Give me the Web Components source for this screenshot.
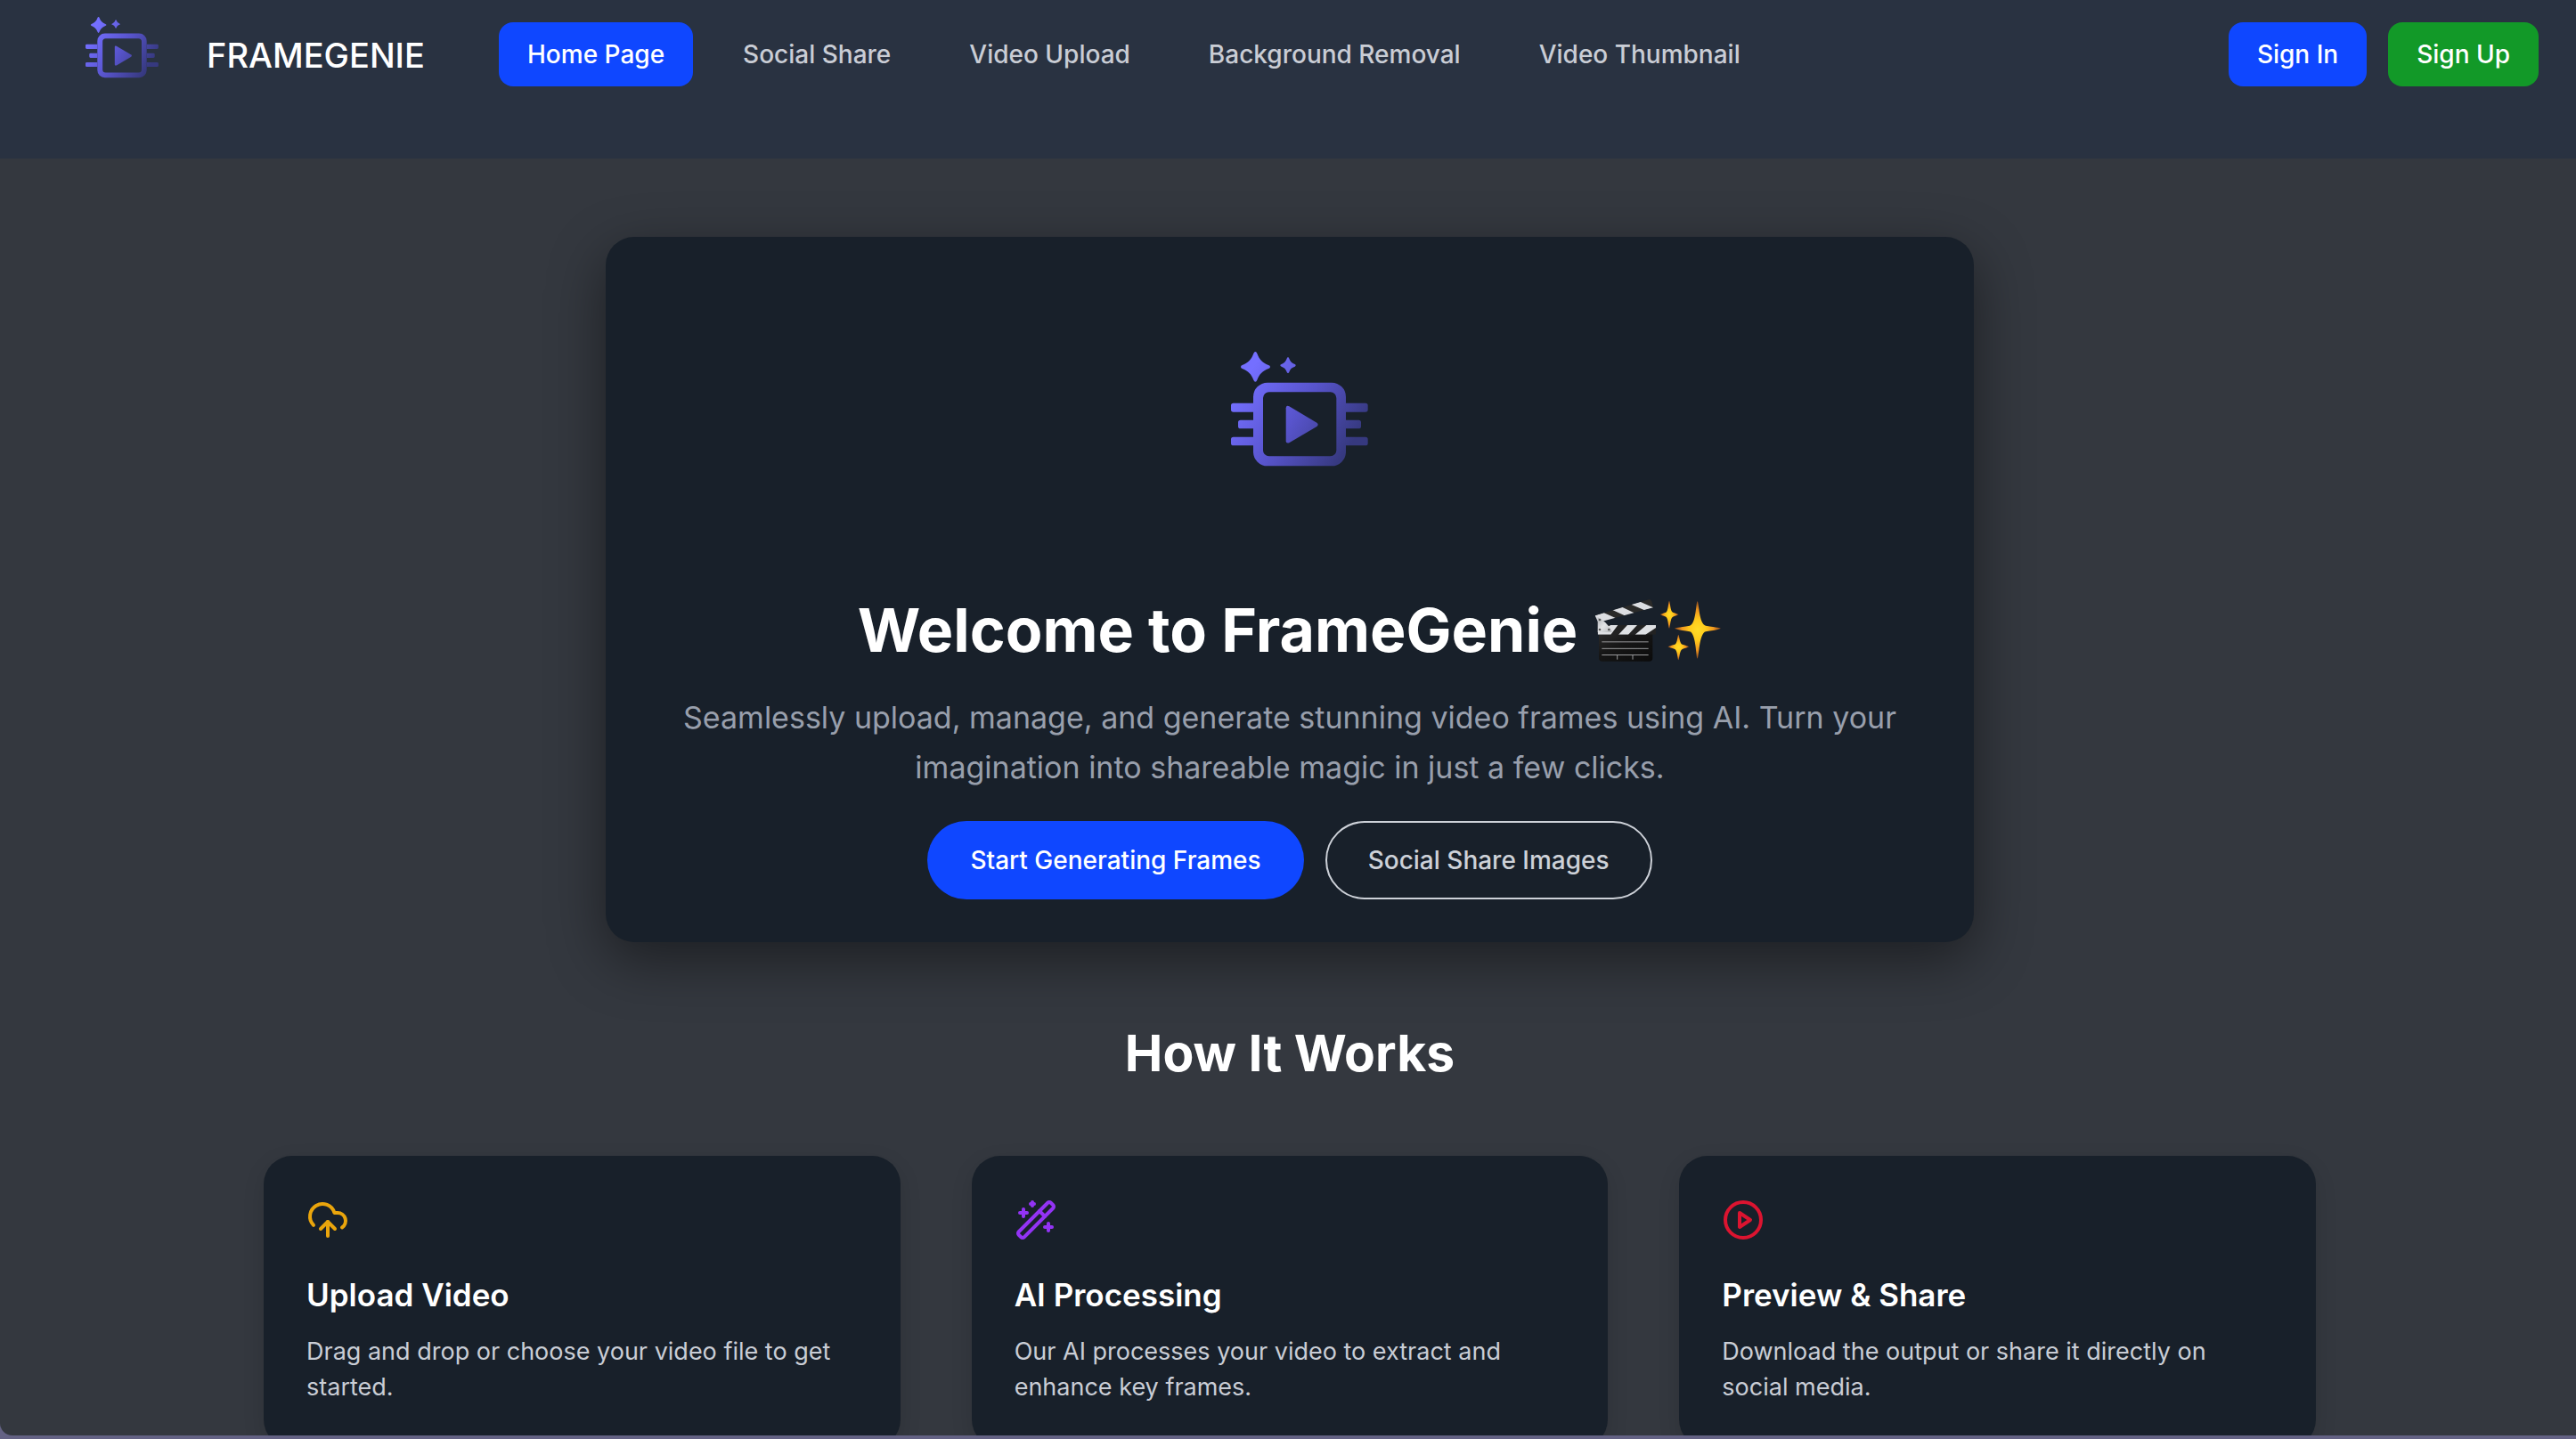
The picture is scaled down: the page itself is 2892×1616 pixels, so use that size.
<!DOCTYPE html>
<html lang="en">
<head>
<meta charset="utf-8">
<title>FrameGenie</title>
<style>
  html { background: #646284; }
  body { margin: 0; font-family: Inter, "Liberation Sans", sans-serif; color: #fff; }
</style>
</head>
<body>
<fg-app>
  <fg-header slot="header">
    <fg-nav-link active>Home Page</fg-nav-link>
    <fg-nav-link>Social Share</fg-nav-link>
    <fg-nav-link>Video Upload</fg-nav-link>
    <fg-nav-link>Background Removal</fg-nav-link>
    <fg-nav-link>Video Thumbnail</fg-nav-link>
    <fg-button slot="actions">Sign In</fg-button>
    <fg-button slot="actions" variant="success">Sign Up</fg-button>
  </fg-header>
  <fg-hero>
    <span slot="title">Welcome to FrameGenie</span>
    <span slot="text">Seamlessly upload, manage, and generate stunning video frames using AI. Turn your imagination into shareable magic in just a few clicks.</span>
    <fg-button slot="actions" variant="pill">Start Generating Frames</fg-button>
    <fg-button slot="actions" variant="outline">Social Share Images</fg-button>
  </fg-hero>
  <fg-steps>
    <span slot="title">How It Works</span>
    <fg-card icon="upload"><span slot="title">Upload Video</span>Drag and drop or choose your video file to get started.</fg-card>
    <fg-card icon="wand"><span slot="title">AI Processing</span>Our AI processes your video to extract and enhance key frames.</fg-card>
    <fg-card icon="play"><span slot="title">Preview &amp; Share</span>Download the output or share it directly on social media.</fg-card>
  </fg-steps>
</fg-app>

<script>
  const define = (name, render) => customElements.define(name, class extends HTMLElement {
    constructor() {
      super();
      this.attachShadow({ mode: 'open' });
    }
    connectedCallback() {
      this.shadowRoot.innerHTML = render(this);
    }
  });

  define('fg-app', () => `
    <style>
      :host { display: flex; flex-direction: column; height: calc(100vh - 4px); overflow: hidden;
              background: #34383f; border-radius: 0 0 0 14px; }
      main { display: flex; flex-direction: column; align-items: center; padding: 88px 0 0 4px; gap: 84px; }
    </style>
    <slot name="header"></slot>
    <main><slot></slot></main>`);

  define('fg-logo', () => `
    <style>
      :host { display: block; flex: none; }
      svg { display: block; width: 100%; }
    </style>
    <svg viewBox="126 104 462 386" role="img" aria-label="FrameGenie logo">
      <defs>
        <linearGradient id="g" gradientUnits="userSpaceOnUse" x1="190" y1="170" x2="540" y2="400">
          <stop offset="0" stop-color="#746fff"/>
          <stop offset=".5" stop-color="#5854cc"/>
          <stop offset="1" stop-color="#36397f"/>
        </linearGradient>
      </defs>
      <g fill="url(#g)">
        <path d="M208 104q4 0 6 6c7 20 18 31 38 39q6 2 6 6t-6 6c-20 8-31 19-38 38q-2 6-6 6t-6-6c-7-19-18-30-38-38q-5-2-5-6t5-6c20-8 31-19 38-39q2-6 6-6z"/>
        <path d="M318 123q3 0 4 4c4 10 9 15 19 19q3 1 3 4t-3 4c-10 3-15 8-19 18q-1 4-4 4t-4-4c-4-10-9-15-18-18q-4-1-4-4t4-4c9-4 14-9 18-19q1-4 4-4z"/>
        <path fill-rule="evenodd" d="M249 208h216a48 48 0 0 1 48 48v185a48 48 0 0 1-48 48H249a48 48 0 0 1-48-48V256a48 48 0 0 1 48-48zM254 240a20 20 0 0 0-20 20v176a20 20 0 0 0 20 20h207a20 20 0 0 0 20-20V260a20 20 0 0 0-20-20z"/>
        <path d="M201 277h-67q-8 0-8 8v14q0 8 8 8h67zM201 334h-43q-8 0-8 8v13q0 8 8 8h43zM201 391h-67q-8 0-8 8v13q0 8 8 8h67z"/>
        <path d="M513 277h66q8 0 8 8v14q0 8-8 8h-66zM513 334h43q8 0 8 8v13q0 8-8 8h-43zM513 391h66q8 0 8 8v13q0 8-8 8h-66z"/>
        <path d="M311 294q0-11 11-6l93 55q8 6 0 13l-93 55q-11 3-11-6z"/>
      </g>
    </svg>`);

  define('fg-header', () => `
    <style>
      :host { display: block; background: #293241; flex: none; }
      header { display: flex; align-items: flex-start; box-sizing: border-box; min-height: 178px; padding: 25px 42px 0 96px; }
      fg-logo { width: 82px; margin: -6px 54px 0 0; }
      .brand { font-size: 38px; line-height: 74px; font-weight: 500; color: #fff; text-decoration: none; min-width: 248px; margin-right: 80px; }
      nav, .actions { display: flex; gap: 24px; }
      .actions { margin-left: auto; }
    </style>
    <header>
      <fg-logo></fg-logo>
      <a class="brand" href="#">FRAMEGENIE</a>
      <nav><slot></slot></nav>
      <div class="actions"><slot name="actions"></slot></div>
    </header>`);

  define('fg-nav-link', () => `
    <style>
      :host { display: block; }
      a { display: block; padding: 16px 32px; border-radius: 16px; font-size: 28px; line-height: 40px;
          font-weight: 500; color: #c9cdd5; text-decoration: none; white-space: nowrap; }
      :host([active]) a { background: #0f47ff; color: #fff; }
    </style>
    <a href="#"><slot></slot></a>`);

  define('fg-button', () => `
    <style>
      :host { display: block; }
      button { display: block; box-sizing: border-box; border: 0; margin: 0; padding: 16px 32px; border-radius: 16px; font: inherit;
               font-size: 28px; line-height: 40px; font-weight: 500; color: #fff; background: #0f47ff; white-space: nowrap; }
      :host([variant=success]) button { background: #129928; }
      :host([variant=pill]) button { padding: 24px 48px; border-radius: 44px; }
      :host([variant=outline]) button { padding: 22px 46px; border-radius: 44px; border: 2px solid #cdd1d8; background: none; color: #cdd1d8; }
    </style>
    <button type="button"><slot></slot></button>`);

  define('fg-emoji', () => `
    <style>
      :host { display: block; flex: none; width: 144px; }
      svg { display: block; width: 100%; }
    </style>
    <svg viewBox="90 60 432 216" role="img" aria-label="clapper board and sparkles">
      <defs>
        <linearGradient id="b" x1="0" y1="0" x2="1" y2="1">
          <stop offset="0" stop-color="#2b2b2b"/><stop offset=".4" stop-color="#161616"/><stop offset="1" stop-color="#0b0b0b"/>
        </linearGradient>
        <linearGradient id="m" x1="0" y1="0" x2="1" y2="1">
          <stop offset="0" stop-color="#aeb1b5"/><stop offset=".5" stop-color="#e2e4e6"/><stop offset="1" stop-color="#b4b7ba"/>
        </linearGradient>
        <radialGradient id="s">
          <stop offset="0" stop-color="#ffdc28"/><stop offset=".35" stop-color="#ffcb1c"/><stop offset=".7" stop-color="#f0961e"/><stop offset="1" stop-color="#8a4a20"/>
        </radialGradient>
        <clipPath id="top"><path d="M95 121 278 66q8 0 13 28L106 144z"/></clipPath>
        <clipPath id="bar"><path d="M104 153h196v32H104z"/></clipPath>
      </defs>
      <g clip-path="url(#top)">
        <path fill="#2a2a29" d="M90 60h210v90H90z"/>
        <path fill="#dcdee2" d="M94 121l30-10 45 20-36 10-40 6zM154 102l32-10 44 21-32 9zM216 83l31-9 46 21-31 8z"/>
      </g>
      <path fill="url(#b)" d="M108 180h181v84q0 11-11 11H119q-11 0-11-11z"/>
      <g clip-path="url(#bar)">
        <path fill="#222" d="M104 153h196v32H104z"/>
        <path fill="#dfe1e4" d="M204 153h33l-30 32h-33zM268 153h33v8l-36 24h-35zM148 153h24l-24 32h-44v-8z"/>
      </g>
      <path fill="url(#m)" d="M104 127q28 12 47 45v5h-47z"/>
      <circle cx="111" cy="135" r="4" fill="#555"/><circle cx="111" cy="168" r="4" fill="#555"/><circle cx="142" cy="168" r="4" fill="#555"/>
      <path stroke="#98999b" stroke-width="3" fill="none" d="M118 209.500h157M118 232h157M118 253.500h157M170 255v14M222 255v14"/>
      <g fill="url(#s)">
        <path d="M440 73c5 0 5 78 28 82 40 6 50 7 50 9s-10 4-50 11c-23 5-23 91-28 91s-4-86-26-91c-39-7-50-9-50-11s11-3 50-9c22-4 21-82 26-82z"/>
        <path d="M345 71c3 0 3 35 12 39 15 5 19 6 19 7s-4 3-19 8c-9 4-9 39-12 39s-3-35-11-39c-15-5-19-7-19-8s4-2 19-7c8-4 8-39 11-39z"/>
        <path d="M376 185c3 0 3 29 13 33 17 5 22 7 22 8s-5 3-22 8c-10 4-10 37-13 37s-3-33-12-37c-17-5-23-7-23-8s6-3 23-8c9-4 9-33 12-33z"/>
      </g>
    </svg>`);

  define('fg-hero', () => `
    <style>
      :host { display: block; width: 100%; max-width: 1536px; }
      section { display: flex; flex-direction: column; align-items: center; padding: 48px;
                background: #18202a; border-radius: 32px; box-shadow: 0 20px 64px rgba(0, 0, 0, .45); }
      .art { display: flex; justify-content: center; box-sizing: border-box; width: 320px; height: 320px; padding: 81px 0 0 22px; }
      fg-logo { width: 154px; }
      h1 { display: flex; align-items: center; gap: 18px; margin: 31px 0 29px; font-size: 68px; line-height: 84px; font-weight: 700; }
      p { margin: 0; font-size: 34px; line-height: 56px; color: #989fac; text-align: center; }
      .actions { display: flex; gap: 24px; margin-top: 32px; }
    </style>
    <section>
      <div class="art"><fg-logo></fg-logo></div>
      <h1><slot name="title"></slot><fg-emoji></fg-emoji></h1>
      <p><slot name="text"></slot></p>
      <div class="actions"><slot name="actions"></slot></div>
    </section>`);

  define('fg-steps', () => `
    <style>
      :host { display: block; width: 100%; max-width: 2304px; }
      h2 { margin: 0 0 74px; font-size: 57px; line-height: 82px; font-weight: 700; text-align: center; }
      .grid { display: grid; grid-template-columns: repeat(3, 1fr); gap: 80px; }
    </style>
    <h2><slot name="title"></slot></h2>
    <div class="grid"><slot></slot></div>`);

  const icons = {
    upload: ['#eaa50c', '<path d="M12 13v8"/><path d="M4 14.899A7 7 0 1 1 15.710 8h1.790a4.500 4.500 0 0 1 2.500 8.242"/><path d="m8 17 4-4 4 4"/>'],
    wand: ['#9333f5', '<path d="m21.640 3.640-1.280-1.280a1.210 1.210 0 0 0-1.720 0L2.360 18.640a1.210 1.210 0 0 0 0 1.720l1.280 1.280a1.200 1.200 0 0 0 1.720 0L21.640 5.360a1.200 1.200 0 0 0 0-1.720"/><path d="m14 7 3 3"/><path d="M5 6v4"/><path d="M19 14v4"/><path d="M10 2v2"/><path d="M7 8H3"/><path d="M21 16h-4"/><path d="M11 3H9"/>'],
    play: ['#dc1430', '<circle cx="12" cy="12" r="10"/><polygon points="10 8 16 12 10 16 10 8"/>'],
  };

  define('fg-card', (el) => {
    const [color, shapes] = icons[el.getAttribute('icon')];
    return `
    <style>
      :host { display: block; }
      article { padding: 48px; background: #18202a; border-radius: 32px; box-shadow: 0 8px 24px rgba(0, 0, 0, .12); }
      svg { display: block; width: 48px; height: 48px; margin-bottom: 32px; fill: none; stroke: ${color};
            stroke-width: 2; stroke-linecap: round; stroke-linejoin: round; }
      h3 { margin: 0 0 16px; font-size: 35px; line-height: 56px; font-weight: 600; }
      p { margin: 0; font-size: 27px; line-height: 40px; color: #c9cdd5; }
    </style>
    <article>
      <svg viewBox="0 0 24 24" aria-hidden="true">${shapes}</svg>
      <h3><slot name="title"></slot></h3>
      <p><slot></slot></p>
    </article>`;
  });
</script>
</body>
</html>
